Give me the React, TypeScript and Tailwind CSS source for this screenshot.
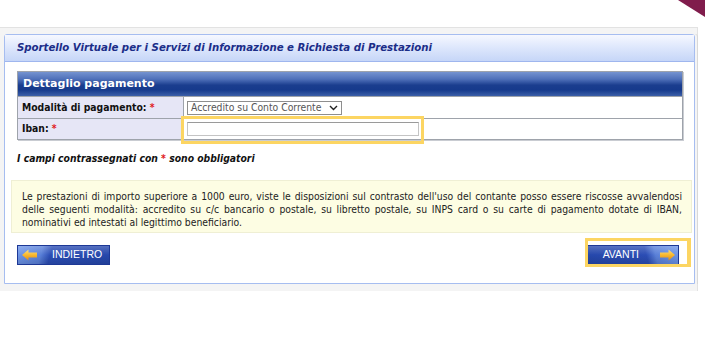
import React from "react";

function ArrowLeft() {
  return (
    <svg width="16" height="12" viewBox="0 0 16 12">
      <defs>
        <linearGradient id="al" x1="0" y1="0" x2="0" y2="1">
          <stop offset="0" stopColor="#ffe27a" />
          <stop offset="0.5" stopColor="#f8b830" />
          <stop offset="1" stopColor="#e08a10" />
        </linearGradient>
      </defs>
      <polygon points="0,6 6.5,0.5 6.5,3.5 15,3.5 15,8.5 6.5,8.5 6.5,11.5" fill="url(#al)" />
    </svg>
  );
}

function ArrowRight() {
  return (
    <svg width="16" height="12" viewBox="0 0 16 12">
      <defs>
        <linearGradient id="ar" x1="0" y1="0" x2="0" y2="1">
          <stop offset="0" stopColor="#ffe27a" />
          <stop offset="0.5" stopColor="#f8b830" />
          <stop offset="1" stopColor="#e08a10" />
        </linearGradient>
      </defs>
      <polygon points="16,6 9.5,0.5 9.5,3.5 1,3.5 1,8.5 9.5,8.5 9.5,11.5" fill="url(#ar)" />
    </svg>
  );
}

export default function App() {
  return (
    <div className="relative w-[705px] h-[340px] overflow-hidden bg-white font-['DejaVu_Sans_Condensed','DejaVu_Sans',sans-serif] font-stretch-condensed text-[10.3px] text-[#111]">
      <svg className="absolute top-0 right-0" width="27" height="18" viewBox="0 0 27 18">
        <polygon points="0,0 27,0 27,17" fill="#801c4c" />
      </svg>

      <div className="pt-[27px]">
        <div className="w-[698px] h-[264px] bg-[#f4f4f4] border-t border-r border-[#e2e2e2] pl-[4px] pt-[6px]">
          <div className="w-[691px] h-[250px] border border-[#a6bdf0] rounded-t-[3px] bg-white flex flex-col shadow-[2px_0_0_#f4f4f4,3px_0_0_#d8d8d8]">
            <div className="h-[27px] border-b border-[#9fb6ee] bg-[linear-gradient(to_bottom,#f6f8ff_0%,#dfe8fc_45%,#c6d6f8_100%)] flex items-center pl-[12px]">
              <span className="italic font-bold text-[#1b2d88] text-[11.3px]">
                Sportello Virtuale per i Servizi di Informazione e Richiesta di Prestazioni
              </span>
            </div>

            <div className="flex flex-col pl-[12px] pr-[11px]">
              <div className="mt-[9px] border border-[#9ea3ab] shadow-[1px_1px_0_#c9ccd2]">
                <div className="h-[24px] flex items-center pl-[5px] bg-[linear-gradient(to_bottom,#7593d0_0%,#4f70b9_30%,#1a3d8e_55%,#163a8c_75%,#3c5fa8_100%)]">
                  <span className="text-white font-bold text-[11px] font-['DejaVu_Sans',sans-serif] font-stretch-normal">Dettaglio pagamento</span>
                </div>
                <div className="flex h-[22px] border-t border-[#9ea3ab]">
                  <div className="w-[166px] shrink-0 bg-[#e6e6f6] border-r border-[#9ea3ab] flex items-center pl-[4px] font-bold">
                    Modalità di pagamento:&nbsp;<span className="text-[#e0201c]">*</span>
                  </div>
                  <div className="flex items-center pl-[3px]">
                    <div className="w-[155px] h-[14px] border border-[#8e8e8e] bg-white flex items-center justify-between pl-[3px] pr-[3px] text-[#555]">
                      <span className="leading-none">Accredito su Conto Corrente</span>
                      <svg width="9" height="6" viewBox="0 0 9 6">
                        <polyline points="1,1 4.5,4.5 8,1" fill="none" stroke="#222" strokeWidth="1.4" />
                      </svg>
                    </div>
                  </div>
                </div>
                <div className="flex h-[21px] border-t border-[#9ea3ab]">
                  <div className="w-[166px] shrink-0 bg-[#e6e6f6] border-r border-[#9ea3ab] flex items-center pl-[4px] font-bold">
                    Iban:&nbsp;<span className="text-[#e0201c]">*</span>
                  </div>
                  <div className="relative flex items-center pl-[3px]">
                    <div className="w-[232px] h-[14px] border border-[#c4c4c4] border-t-[#9a9a9a] bg-white" />
                    <div className="pointer-events-none absolute left-[-3px] top-[-3px] w-[243px] h-[28px] border-[3px] border-[#fcd562]" />
                  </div>
                </div>
              </div>

              <div className="mt-[12px] h-[13px] leading-[13px] font-bold italic">
                I campi contrassegnati con <span className="text-[#e0201c]">*</span> sono obbligatori
              </div>

              <div className="mt-[15px] -ml-[6px] -mr-[9px] h-[53px] bg-[#fdfde3] border border-[#efefd4] pt-[9px] pl-[10px] pr-[9px] text-[#222] leading-[13px] text-justify">
                Le prestazioni di importo superiore a 1000 euro, viste le disposizioni sul contrasto dell'uso del contante posso essere riscosse avvalendosi delle seguenti modalità: accredito su c/c bancario o postale, su libretto postale, su INPS card o su carte di pagamento dotate di IBAN, nominativi ed intestati al legittimo beneficiario.
              </div>

              <div className="mt-[12px] flex justify-between pr-[4px]">
                <div className="w-[93px] h-[20px] border border-[#1d3896] flex items-center pl-[4px] bg-[linear-gradient(to_bottom,rgba(255,255,255,0.22),rgba(255,255,255,0)_50%,rgba(0,0,0,0.12)),linear-gradient(105deg,#7097e8_0%,#5a80d8_26%,#2b4db4_36%,#2547ab_100%)]">
                  <ArrowLeft />
                  <span className="ml-[14px] text-white text-[10.5px] font-['Liberation_Sans',Arial,sans-serif] font-stretch-normal">INDIETRO</span>
                </div>
                <div className="relative">
                  <div className="w-[92px] h-[20px] border border-[#1d3896] flex items-center justify-end pr-[3px] bg-[linear-gradient(to_bottom,rgba(255,255,255,0.22),rgba(255,255,255,0)_50%,rgba(0,0,0,0.12)),linear-gradient(75deg,#2547ab_0%,#2b4db4_64%,#5a80d8_74%,#7097e8_100%)]">
                    <span className="mr-[20px] text-white text-[10.5px] font-['Liberation_Sans',Arial,sans-serif] font-stretch-normal">AVANTI</span>
                    <ArrowRight />
                  </div>
                  <div className="pointer-events-none absolute left-[-2px] top-[-7px] w-[106px] h-[29px] border-[3px] border-r-[4px] border-[#fcd562]" />
                </div>
              </div>
            </div>
          </div>
        </div>
      </div>
    </div>
  );
}
